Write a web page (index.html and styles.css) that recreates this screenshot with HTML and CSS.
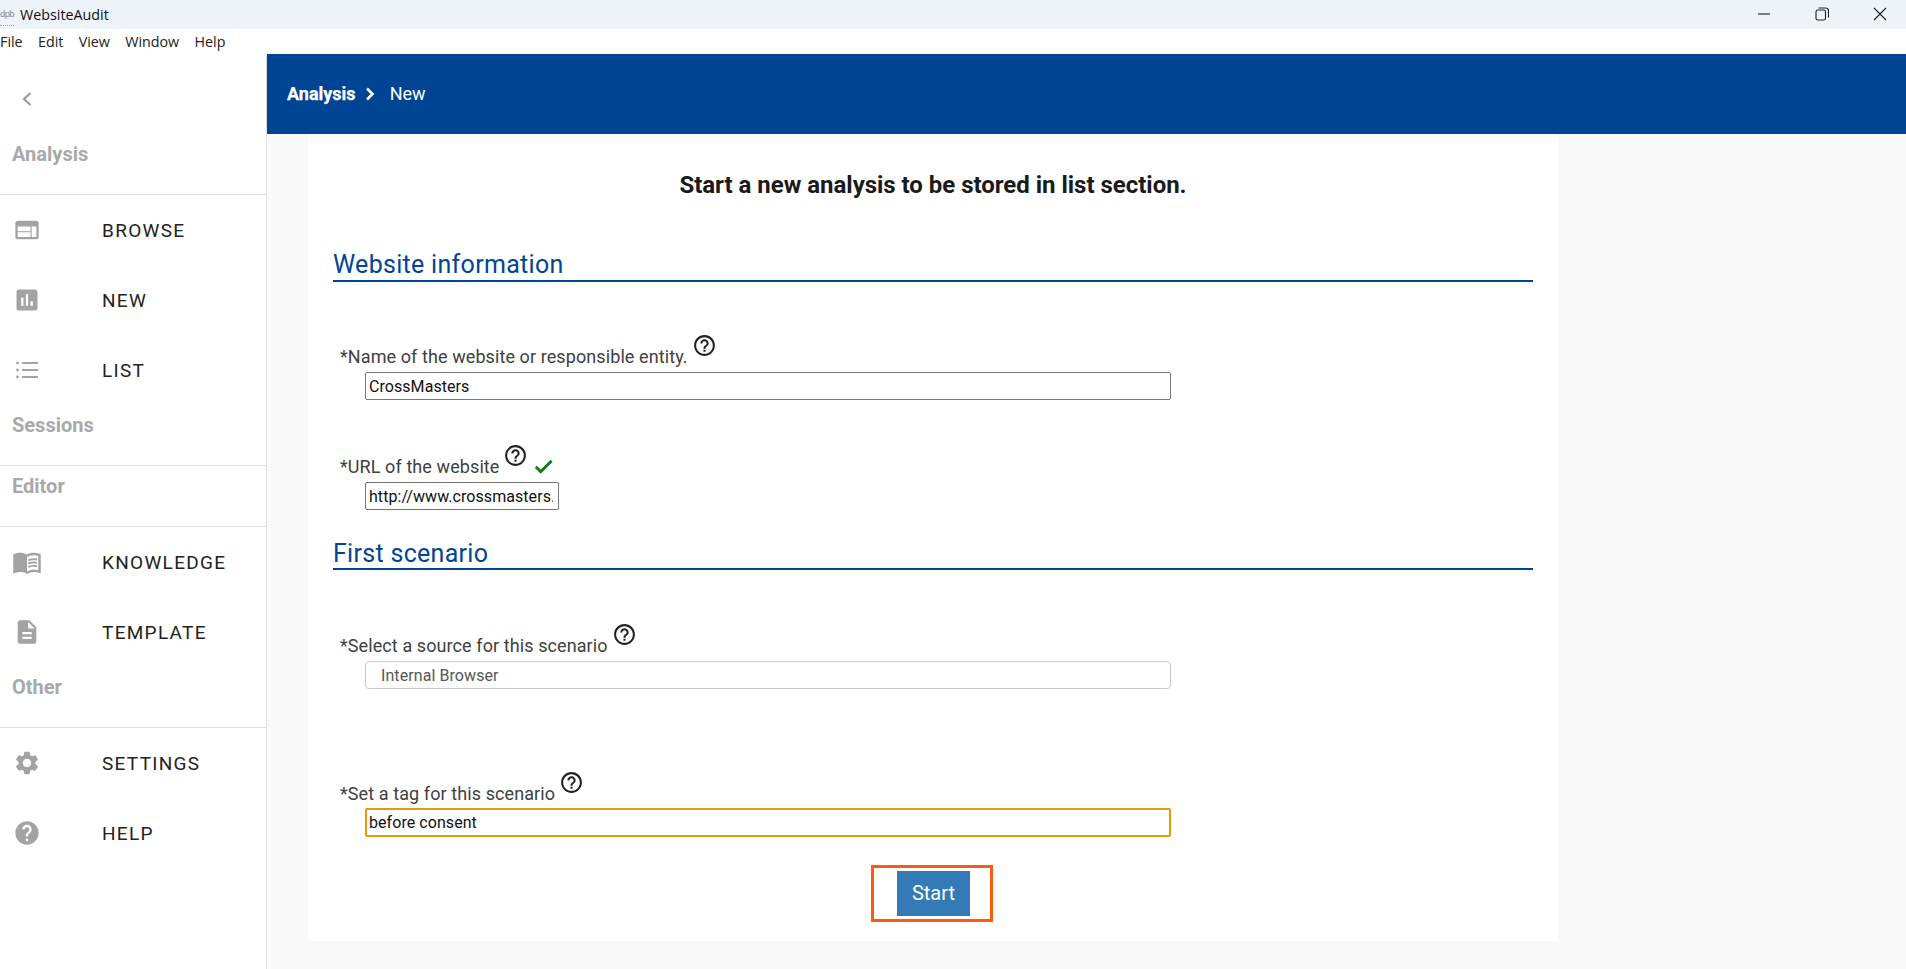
FILE: index.html
```html
<!DOCTYPE html>
<html lang="en">
<head>
<meta charset="utf-8">
<title>WebsiteAudit</title>
<link rel="stylesheet" href="styles.css">
</head>
<body>
<div class="titlebar">
  <div class="app-id">
    <span class="logo">dpb</span>
    <span class="app-name">WebsiteAudit</span>
  </div>
  <div class="win-controls">
    <svg class="win-btn" viewBox="0 0 14 14"><path d="M1 7h12" /></svg>
    <svg class="win-btn" viewBox="0 0 14 14"><rect x="1" y="3" width="9.5" height="10" rx="1.8" /><path d="M3.5 1h7a3 3 0 0 1 3 3v6.5" /></svg>
    <svg class="win-btn" viewBox="0 0 14 14"><path d="M1 1l12 12M13 1L1 13" /></svg>
  </div>
</div>
<nav class="menubar">
  <span>File</span><span>Edit</span><span>View</span><span>Window</span><span>Help</span>
</nav>
<div class="app">
  <aside class="sidebar">
    <div class="back">
      <svg viewBox="0 0 12 16" class="chevron"><path d="M9.5 2L3 8l6.5 6" /></svg>
    </div>
    <div class="group-title">Analysis</div>
    <a class="item"><svg class="ico" viewBox="0 0 24 24"><path d="M20 4H4c-1.1 0-1.99.9-1.99 2L2 18c0 1.1.9 2 2 2h16c1.1 0 2-.9 2-2V6c0-1.1-.9-2-2-2zm-5 14H4v-4h11v4zm0-5H4V9h11v4zm5 5h-4V9h4v9z"/></svg><span>BROWSE</span></a>
    <a class="item"><svg class="ico" viewBox="0 0 24 24"><path d="M19 3H5c-1.1 0-2 .9-2 2v14c0 1.1.9 2 2 2h14c1.1 0 2-.9 2-2V5c0-1.1-.9-2-2-2zM9 17H7v-7h2v7zm4 0h-2V7h2v10zm4 0h-2v-4h2v4z"/></svg><span>NEW</span></a>
    <a class="item"><svg class="ico" viewBox="0 0 28 28"><circle cx="4.5" cy="7" r="1.4"/><circle cx="4.5" cy="14" r="1.4"/><circle cx="4.5" cy="21" r="1.4"/><path d="M9 6h16v2H9zM9 13h16v2H9zM9 20h16v2H9z"/></svg><span>LIST</span></a>
    <div class="group-title">Sessions</div>
    <div class="group-title">Editor</div>
    <a class="item"><svg class="ico ico-book" viewBox="0 0 24 24"><path d="M21 5c-1.11-.35-2.33-.5-3.5-.5-1.95 0-4.05.4-5.5 1.5-1.45-1.1-3.55-1.5-5.5-1.5S2.45 4.9 1 6v14.65c0 .25.25.5.5.5.1 0 .15-.05.25-.05C3.1 20.45 5.05 20 6.5 20c1.95 0 4.05.4 5.5 1.5 1.35-.85 3.8-1.5 5.5-1.5 1.65 0 3.35.3 4.75 1.05.1.05.15.05.25.05.25 0 .5-.25.5-.5V6c-.6-.45-1.25-.75-2-1zm0 13.5c-1.1-.35-2.3-.5-3.5-.5-1.7 0-4.15.65-5.5 1.5V8c1.35-.85 3.8-1.5 5.5-1.5 1.2 0 2.4.15 3.5.5v11.5z"/><path d="M17.5 10.5c.88 0 1.73.09 2.5.26V9.24c-.79-.15-1.64-.24-2.5-.24-1.7 0-3.24.29-4.5.83v1.66c1.13-.64 2.7-.99 4.5-.99zM13 12.49v1.66c1.13-.64 2.7-.99 4.5-.99.88 0 1.73.09 2.5.26V11.9c-.79-.15-1.64-.24-2.5-.24-1.7 0-3.24.3-4.5.83zM17.5 14.33c-1.7 0-3.24.29-4.5.83v1.66c1.13-.64 2.7-.99 4.5-.99.88 0 1.73.09 2.5.26v-1.52c-.79-.16-1.64-.24-2.5-.24z"/></svg><span>KNOWLEDGE</span></a>
    <a class="item"><svg class="ico" viewBox="0 0 24 24"><path d="M14 2H6c-1.1 0-1.99.9-1.99 2L4 20c0 1.1.89 2 1.99 2H18c1.1 0 2-.9 2-2V8l-6-6zm2 16H8v-2h8v2zm0-4H8v-2h8v2zm-3-5V3.5L18.5 9H13z"/></svg><span>TEMPLATE</span></a>
    <div class="group-title">Other</div>
    <a class="item"><svg class="ico" viewBox="0 0 24 24"><path d="M19.14 12.94c.04-.3.06-.61.06-.94 0-.32-.02-.64-.07-.94l2.03-1.58c.18-.14.23-.41.12-.61l-1.92-3.32c-.12-.22-.37-.29-.59-.22l-2.39.96c-.5-.38-1.03-.7-1.62-.94l-.36-2.54c-.04-.24-.24-.41-.48-.41h-3.84c-.24 0-.43.17-.47.41l-.36 2.54c-.59.24-1.13.57-1.62.94l-2.39-.96c-.22-.08-.47 0-.59.22L2.74 8.87c-.12.21-.08.47.12.61l2.03 1.58c-.05.3-.09.63-.09.94s.02.64.07.94l-2.03 1.58c-.18.14-.23.41-.12.61l1.92 3.32c.12.22.37.29.59.22l2.39-.96c.5.38 1.03.7 1.62.94l.36 2.54c.05.24.24.41.48.41h3.84c.24 0 .44-.17.47-.41l.36-2.54c.59-.24 1.13-.56 1.62-.94l2.39.96c.22.08.47 0 .59-.22l1.92-3.32c.12-.22.07-.47-.12-.61l-2.01-1.58zM12 15.6c-1.98 0-3.6-1.62-3.6-3.6s1.62-3.6 3.6-3.6 3.6 1.62 3.6 3.6-1.62 3.6-3.6 3.6z"/></svg><span>SETTINGS</span></a>
    <a class="item"><svg class="ico" viewBox="0 0 24 24"><path d="M12 2C6.48 2 2 6.48 2 12s4.48 10 10 10 10-4.48 10-10S17.52 2 12 2zm1 17h-2v-2h2v2zm2.07-7.75l-.9.92C13.45 12.9 13 13.5 13 15h-2v-.5c0-1.1.45-2.1 1.17-2.83l1.24-1.26c.37-.36.59-.86.59-1.41 0-1.1-.9-2-2-2s-2 .9-2 2H8c0-2.21 1.79-4 4-4s4 1.79 4 4c0 .88-.36 1.68-.93 2.25z"/></svg><span>HELP</span></a>
  </aside>
  <main class="main">
    <header class="crumbs">
      <span class="crumb-root">Analysis</span>
      <svg class="crumb-sep" viewBox="0 0 10 14"><path d="M2 1.5L7.5 7 2 12.5" /></svg>
      <span class="crumb-leaf">New</span>
    </header>
    <div class="card">
      <h1 class="title">Start a new analysis to be stored in list section.</h1>
      <h2 class="section">Website information</h2>

      <div class="field field-name">
        <div class="label-row">
          <label class="label">*Name of the website or responsible entity.</label>
          <svg class="hint" viewBox="0 0 24 24"><path d="M11 18h2v-2h-2v2zm1-16C6.48 2 2 6.48 2 12s4.48 10 10 10 10-4.48 10-10S17.52 2 12 2zm0 18c-4.41 0-8-3.59-8-8s3.59-8 8-8 8 3.59 8 8-3.59 8-8 8zm0-14c-2.21 0-4 1.79-4 4h2c0-1.1.9-2 2-2s2 .9 2 2c0 2-3 1.75-3 5h2c0-2.25 3-2.5 3-5 0-2.21-1.79-4-4-4z"/></svg>
        </div>
        <input class="input" type="text" value="CrossMasters">
      </div>

      <div class="field field-url">
        <div class="label-row">
          <label class="label">*URL of the website</label>
          <svg class="hint" viewBox="0 0 24 24"><path d="M11 18h2v-2h-2v2zm1-16C6.48 2 2 6.48 2 12s4.48 10 10 10 10-4.48 10-10S17.52 2 12 2zm0 18c-4.41 0-8-3.59-8-8s3.59-8 8-8 8 3.59 8 8-3.59 8-8 8zm0-14c-2.21 0-4 1.79-4 4h2c0-1.1.9-2 2-2s2 .9 2 2c0 2-3 1.75-3 5h2c0-2.25 3-2.5 3-5 0-2.21-1.79-4-4-4z"/></svg>
          <svg class="check" viewBox="3 5 19 15"><path d="M9 16.17 4.83 12l-1.42 1.41L9 19 21 7l-1.41-1.41z"/></svg>
        </div>
        <input class="input input-short" type="text" value="http://www.crossmasters.com">
      </div>

      <h2 class="section section-second">First scenario</h2>

      <div class="field field-source">
        <div class="label-row">
          <label class="label">*Select a source for this scenario</label>
          <svg class="hint" viewBox="0 0 24 24"><path d="M11 18h2v-2h-2v2zm1-16C6.48 2 2 6.48 2 12s4.48 10 10 10 10-4.48 10-10S17.52 2 12 2zm0 18c-4.41 0-8-3.59-8-8s3.59-8 8-8 8 3.59 8 8-3.59 8-8 8zm0-14c-2.21 0-4 1.79-4 4h2c0-1.1.9-2 2-2s2 .9 2 2c0 2-3 1.75-3 5h2c0-2.25 3-2.5 3-5 0-2.21-1.79-4-4-4z"/></svg>
        </div>
        <select class="select"><option>Internal Browser</option></select>
      </div>

      <div class="field field-tag">
        <div class="label-row">
          <label class="label">*Set a tag for this scenario</label>
          <svg class="hint" viewBox="0 0 24 24"><path d="M11 18h2v-2h-2v2zm1-16C6.48 2 2 6.48 2 12s4.48 10 10 10 10-4.48 10-10S17.52 2 12 2zm0 18c-4.41 0-8-3.59-8-8s3.59-8 8-8 8 3.59 8 8-3.59 8-8 8zm0-14c-2.21 0-4 1.79-4 4h2c0-1.1.9-2 2-2s2 .9 2 2c0 2-3 1.75-3 5h2c0-2.25 3-2.5 3-5 0-2.21-1.79-4-4-4z"/></svg>
        </div>
        <input class="input input-focus" type="text" value="before consent">
      </div>

      <div class="actions">
        <div class="highlight"><button class="start" type="button">Start</button></div>
      </div>
    </div>
  </main>
</div>
</body>
</html>
```
FILE: styles.css
```css
* { box-sizing: border-box; }
html, body { margin: 0; height: 100%; }
body {
  height: 969px;
  overflow: hidden;
  background: #fff;
  color: #222;
  font-family: Roboto, "Liberation Sans", sans-serif;
  display: flex;
  flex-direction: column;
}
.titlebar {
  height: 29px;
  flex: none;
  background: #eef3fa;
  display: flex;
  align-items: center;
  justify-content: space-between;
}
.app-id { display: flex; align-items: center; }
.logo {
  width: 14px;
  height: 19px;
  margin: 4px 6px 0 0;
  font: 300 9.5px/13px "Liberation Sans", sans-serif;
  letter-spacing: -.6px;
  white-space: nowrap;
  color: #8c8c8c;
  border-bottom: 1px dotted #aaa;
}
.app-name {
  font: 14.3px "Open Sans", "Noto Sans", sans-serif;
  color: #111;
}
.win-controls { display: flex; gap: 44px; padding-right: 19px; margin-top: -2px; }
.win-btn {
  width: 14px;
  height: 14px;
  fill: none;
  stroke: #222;
  stroke-width: 1.15;
}
.menubar {
  height: 25px;
  flex: none;
  display: flex;
  align-items: center;
  gap: 15.3px;
  font: 14.3px "Open Sans", "Noto Sans", sans-serif;
  color: #222;
}
.app { flex: 1; display: flex; min-height: 0; }
.sidebar {
  width: 267px;
  flex: none;
  border-right: 1px solid #e0e0e0;
  background: #fff;
}
.back { height: 80px; padding: 37px 0 0 21px; }
.chevron {
  display: block;
  width: 12px;
  height: 16px;
  fill: none;
  stroke: #999;
  stroke-width: 2.1;
}
.group-title {
  height: 61px;
  padding: 10px 0 0 12px;
  font-size: 20px;
  line-height: 20px;
  font-weight: 700;
  color: #a9a9a9;
  border-bottom: 1px solid #e0e0e0;
}
.item {
  height: 70px;
  display: flex;
  align-items: center;
  font-size: 19px;
  letter-spacing: 1.3px;
  color: #222;
}
.item span { margin-left: 60px; }
.ico { width: 28px; height: 28px; margin-left: 13px; margin-right: 1px; flex: none; fill: #a3a3a3; }
.ico-book { width: 30px; height: 30px; margin-left: 12px; margin-right: 0; }
.main { flex: 1; background: #f9f9f9; display: flex; flex-direction: column; min-width: 0; }
.crumbs {
  height: 80px;
  flex: none;
  background: #004494;
  color: #fff;
  display: flex;
  align-items: center;
  padding: 0 0 2px 20px;
  font-size: 18px;
}
.crumb-root { font-weight: 700; -webkit-text-stroke: .25px #fff; }
.crumb-sep {
  width: 10px;
  height: 14px;
  margin: 2px 15px 0 9px;
  fill: none;
  stroke: #fff;
  stroke-width: 2.6;
}
.card {
  width: 1250px;
  margin-left: 41px;
  background: #fff;
  padding: 36px 25px 19px;
}
.title {
  margin: 0;
  text-align: center;
  font-size: 24px;
  line-height: 30px;
  font-weight: 700;
  letter-spacing: -.02px;
  color: #1a1a1a;
}
.section {
  margin: 48px 0 0;
  height: 34px;
  padding-top: 1px;
  font-size: 25px;
  line-height: 32px;
  font-weight: 400;
  letter-spacing: .3px;
  color: #004494;
  border-bottom: 2px solid #004494;
}
.section-second { margin-top: 27px; height: 33px; }
.field-name { margin-top: 52px; }
.field-url { margin-top: 44px; }
.field-source { margin-top: 53px; }
.field-tag { margin-top: 82px; }
.field-tag .label-row { margin-bottom: 3px; }
.label-row {
  display: flex;
  align-items: flex-start;
  height: 34px;
  margin: 0 0 4px 7px;
}
.label {
  margin-top: 12px;
  font-size: 18px;
  line-height: 22px;
  letter-spacing: .09px;
  color: #404040;
}
.hint { width: 25px; height: 25px; margin: -1px 0 0 4px; fill: #222; flex: none; }
.check { width: 18px; height: 14px; margin: 16px 0 0 7px; fill: #0b7d0b; stroke: #0b7d0b; stroke-width: 1.1; flex: none; }
.input, .select {
  display: block;
  width: 806px;
  height: 28px;
  margin-left: 32px;
  background: #fff;
  font-family: Roboto, "Liberation Sans", sans-serif;
  font-size: 16px;
  outline: none;
}
.input {
  border: 1px solid #767676;
  border-radius: 2px;
  padding: 0 5px 0 3px;
  letter-spacing: .06px;
  color: #111;
}
.input-short { width: 194px; }
.input-focus { height: 29px; border: 2px solid #e39a0b; padding: 0 2px 1px; }
.select {
  appearance: none;
  border: 1px solid #c8c8c8;
  border-radius: 4px;
  padding: 0 15px;
  letter-spacing: .08px;
  color: #555;
}
.actions { display: flex; justify-content: center; margin-top: 28px; padding-right: 2px; }
.highlight {
  border: 3px solid #fc5a0e;
  padding: 3px 20px 3px 23px;
}
.start {
  display: block;
  width: 73px;
  height: 45px;
  padding: 0 0 2px;
  border: 0;
  background: #337ab7;
  color: #fff;
  font-family: Roboto, "Liberation Sans", sans-serif;
  font-size: 20px;
}
```
